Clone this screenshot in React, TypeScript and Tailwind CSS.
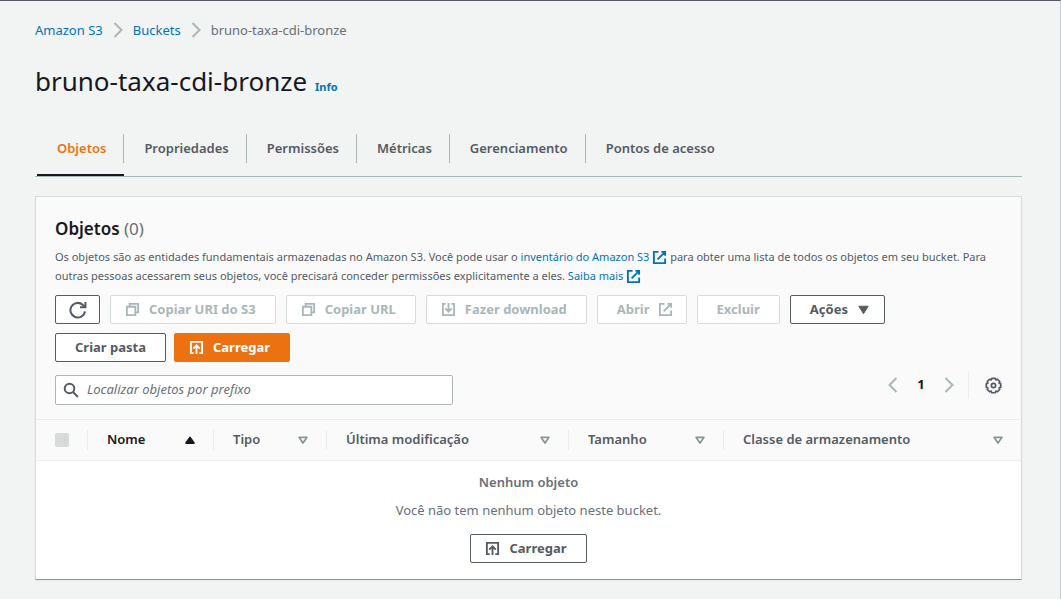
import type { ReactNode } from "react";

type IconProps = { className?: string };

const icon = (path: ReactNode) =>
  function Icon({ className = "size-[15px]" }: IconProps) {
    return (
      <svg viewBox="0 0 16 16" fill="none" stroke="currentColor" strokeWidth="2" aria-hidden="true" className={`shrink-0 ${className}`}>
        {path}
      </svg>
    );
  };

const RefreshIcon = icon(
  <>
    <path strokeWidth="1.800" d="M14.200 9.200A6.500 6.500 0 1 1 12.400 3.600L14 5" />
    <path strokeWidth="1.800" d="M14.600 .8v4.800h-4.800" />
  </>,
);
const CopyIcon = icon(
  <>
    <path d="M2 5h9v9H2z" />
    <path d="M5 5V2h9v9h-3" />
  </>,
);
const DownloadIcon = icon(
  <>
    <path d="M5 2H2v12h12V2h-3" />
    <path d="M8 1v9M4.5 6.8L8 10.3l3.500-3.500" />
  </>,
);
const UploadIcon = icon(
  <>
    <path d="M5 14H2V2h12v12h-3" />
    <path d="M8 15V6M4.500 9.200L8 5.700l3.500 3.500" />
  </>,
);
const ExternalIcon = icon(
  <>
    <path d="M7 2H2v12h12V9" />
    <path d="M10 2h4v4M6 10l8-8" />
  </>,
);
const ChevronRight = icon(<path d="M4.500 1l7 7-7 7" />);
const ChevronLeft = icon(<path d="M11.500 1l-7 7 7 7" />);
const SearchIcon = icon(
  <>
    <circle cx="6.500" cy="6.500" r="4.800" />
    <path d="M10 10l5 5" />
  </>,
);
const GearIcon = icon(
  <>
    <path
      strokeWidth="1.600"
      strokeLinejoin="round"
      d="M6.400 1.200h3.200l.6 1.500 1.500-.6 2.200 2.200-.6 1.500 1.500.6v3.200l-1.500.6.6 1.500-2.200 2.200-1.500-.6-.6 1.500H6.400l-.6-1.500-1.500.6-2.200-2.200.6-1.500-1.500-.6V6.400l1.500-.6-.6-1.500 2.200-2.200 1.500.6z"
    />
    <circle cx="8" cy="8" r="2" strokeWidth="1.600" />
  </>,
);
const CaretDown = icon(<path d="M3 4.500h10L8 12.500z" fill="currentColor" strokeWidth="1" strokeLinejoin="round" />);
const CaretUp = icon(<path d="M3.500 11.500h9L8 5z" fill="currentColor" strokeLinejoin="round" />);
const CaretDownHollow = icon(<path d="M3.500 5h9L8 11.500z" strokeLinejoin="round" />);

function Button({
  children,
  className = "",
  variant = "normal",
  label,
}: {
  children: ReactNode;
  className?: string;
  variant?: "normal" | "disabled" | "primary";
  label?: string;
}) {
  const look = {
    normal: "border-[#545b64] bg-white text-[#545b64]",
    disabled: "border-[#d5dbdb] bg-white text-[#aab7b8]",
    primary: "border-[#ec7211] bg-[#ec7211] text-white",
  }[variant];
  return (
    <button
      type="button"
      aria-label={label}
      disabled={variant === "disabled"}
      className={`flex h-[29px] items-center justify-center whitespace-nowrap rounded-xs border text-[13px] font-bold ${look} ${className}`}
    >
      {children}
    </button>
  );
}

const iconFirst = "gap-[9px] pr-[19px] pl-[14px]";
const iconLast = "gap-2 pr-[13px] pl-[19px]";

const tabs = ["Objetos", "Propriedades", "Permissões", "Métricas", "Gerenciamento", "Pontos de acesso"];

const columns = [
  { name: "Nome", sorted: true },
  { name: "Tipo" },
  { name: "Última modificação" },
  { name: "Tamanho" },
  { name: "Classe de armazenamento" },
];

export default function App() {
  return (
    <div className="min-h-screen border-t border-r border-t-[#545b64] border-r-[#c9cccf] bg-[#f2f3f3] pr-[38px] pb-[18px] pl-[35px] font-['Noto_Sans',sans-serif] text-[13px] text-[#545b64]">
      <nav aria-label="Trilha" className="flex items-center gap-[7px] pt-[19px] pb-[19px] leading-5">
        <a href="#s3" className="text-[#0073bb]">Amazon S3</a>
        <ChevronRight className="size-4 text-[#aab7b8]" />
        <a href="#buckets" className="text-[#0073bb]">Buckets</a>
        <ChevronRight className="size-4 text-[#aab7b8]" />
        <span className="text-[#687078]">bruno-taxa-cdi-bronze</span>
      </nav>

      <header className="flex items-baseline gap-2 pt-1">
        <h1 className="text-[26px] leading-9 text-[#16191f]">bruno-taxa-cdi-bronze</h1>
        <a href="#info" className="text-[11px] font-bold text-[#0073bb]">Info</a>
      </header>

      <div role="tablist" className="mt-[35px] flex border-b border-[#aab7b8] pl-0.5">
        {tabs.map((tab, i) => (
          <button
            key={tab}
            type="button"
            role="tab"
            aria-selected={i === 0}
            className={`flex border-b-2 pb-[11px] font-semibold ${i === 0 ? "border-[#16191f] text-[#ec7211]" : "border-transparent"}`}
          >
            <span className={`flex h-[29px] items-center pr-[17px] pl-5 ${i < tabs.length - 1 ? "border-r border-[#aab7b8]" : ""}`}>{tab}</span>
          </button>
        ))}
      </div>

      <section className="mt-[19px] border border-[#d5dbdb] border-b-[#879596] bg-white shadow-xs">
        <div className="bg-[#fafafa] px-[19px] pt-5 pb-3.5">
          <h2 className="text-[17px] leading-6 font-semibold text-[#16191f]">
            Objetos <span className="font-normal text-[#687078]">(0)</span>
          </h2>
          <p className="mt-1.5 text-[11px] leading-[19px]">
            Os objetos são as entidades fundamentais armazenadas no Amazon S3. Você pode usar o{" "}
            <a href="#inventario" className="text-[#0073bb]">
              inventário do Amazon S3 <ExternalIcon className="inline size-[15px] align-[-4px]" />
            </a>{" "}
            para obter uma lista de todos os objetos em seu bucket. Para outras pessoas acessarem seus objetos, você precisará conceder permissões explicitamente a eles.{" "}
            <a href="#saiba-mais" className="text-[#0073bb]">
              Saiba mais <ExternalIcon className="inline size-[15px] align-[-4px]" />
            </a>
          </p>
          <div className="mt-[10px] flex flex-wrap gap-x-[10px] gap-y-[9px]">
            <Button label="Atualizar" className="w-[45px]"><RefreshIcon className="size-[18px]" /></Button>
            <Button variant="disabled" className={iconFirst}><CopyIcon />Copiar URI do S3</Button>
            <Button variant="disabled" className={iconFirst}><CopyIcon />Copiar URL</Button>
            <Button variant="disabled" className={iconFirst}><DownloadIcon />Fazer download</Button>
            <Button variant="disabled" className={iconLast}>Abrir<ExternalIcon /></Button>
            <Button variant="disabled" className="px-[19px]">Excluir</Button>
            <Button className={iconLast}>Ações<CaretDown /></Button>
            <div className="flex basis-full gap-2">
              <Button className="px-[19px]">Criar pasta</Button>
              <Button variant="primary" className={iconFirst}><UploadIcon />Carregar</Button>
            </div>
          </div>
          <div className="mt-[13px] flex items-start justify-between">
            <label className="flex h-[30px] w-[398px] items-center gap-2 rounded-xs border border-[#aab7b8] bg-white px-[7px]">
              <SearchIcon className="size-4" />
              <input aria-label="Localizar objetos" placeholder="Localizar objetos por prefixo" className="w-full italic outline-none placeholder:text-[#687078]" />
            </label>
            <div className="-mt-1 flex h-7 items-center">
              <button type="button" aria-label="Página anterior" className="text-[#aab7b8]"><ChevronLeft className="size-4" /></button>
              <button type="button" className="w-10 font-bold text-[#16191f]">1</button>
              <button type="button" aria-label="Próxima página" className="text-[#aab7b8]"><ChevronRight className="size-4" /></button>
              <span className="ml-[11px] h-7 border-l border-[#eaeded]" />
              <button type="button" aria-label="Preferências" className="ml-4"><GearIcon className="size-[17px]" /></button>
            </div>
          </div>
        </div>

        <table className="w-full table-fixed">
          <colgroup>
            <col className="w-[52px]" />
            <col className="w-[126px]" />
            <col className="w-[113px]" />
            <col className="w-[242px]" />
            <col className="w-[155px]" />
            <col />
          </colgroup>
          <thead className="border-y border-[#eaeded] bg-[#fafafa]">
            <tr className="h-[41px]">
              <th className="p-0">
                <div className="flex h-5 items-center border-r border-[#eaeded] pl-[19px]">
                  <input type="checkbox" disabled aria-label="Selecionar tudo" className="size-3.5 appearance-none rounded-xs bg-[#d5dbdb]" />
                </div>
              </th>
              {columns.map((c, i) => (
                <th key={c.name} className="p-0 font-semibold">
                  <div className={`flex h-5 items-center justify-between pr-4 pl-[19px] ${i < columns.length - 1 ? "border-r border-[#eaeded]" : ""} ${c.sorted ? "text-[#16191f]" : ""}`}>
                    {c.name}
                    {c.sorted ? <CaretUp className="size-3.5" /> : <CaretDownHollow className="size-3.5 text-[#879596]" />}
                  </div>
                </th>
              ))}
            </tr>
          </thead>
          <tbody>
            <tr>
              <td colSpan={6} className="p-0">
                <div className="flex flex-col items-center pt-[11px] pb-4 text-[#687078]">
                  <b className="leading-5 font-semibold">Nenhum objeto</b>
                  <p className="mt-2 leading-5">Você não tem nenhum objeto neste bucket.</p>
                  <Button className={`mt-3.5 ${iconFirst}`}><UploadIcon />Carregar</Button>
                </div>
              </td>
            </tr>
          </tbody>
        </table>
      </section>
    </div>
  );
}
